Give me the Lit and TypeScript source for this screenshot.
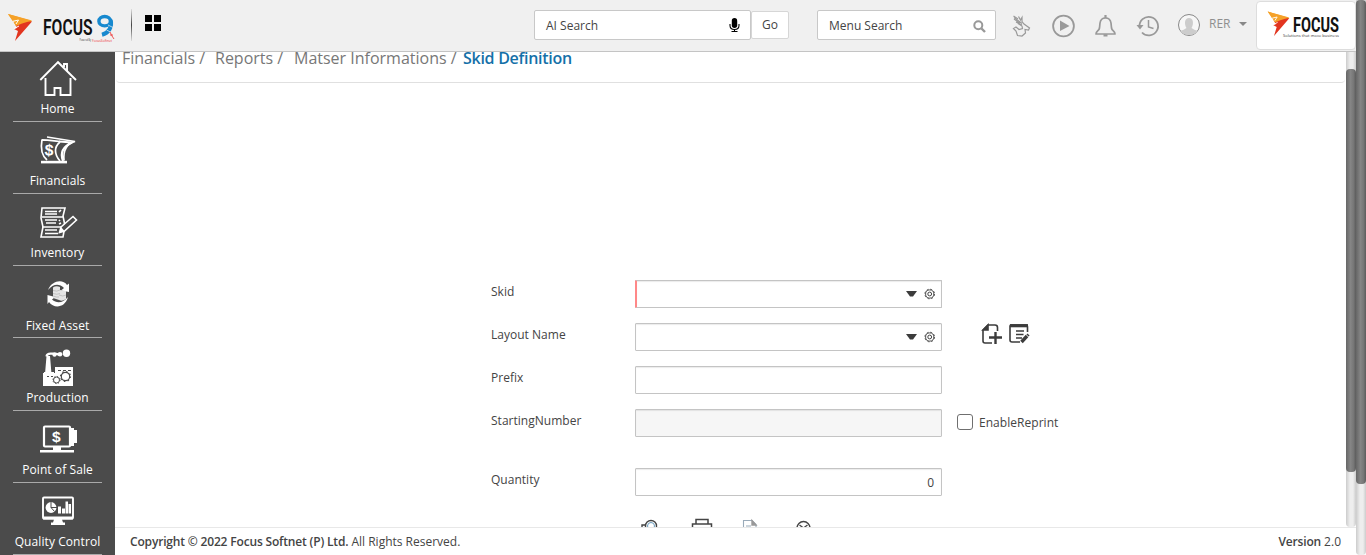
import { LitElement, html, css, svg } from "lit";
import { customElement, property } from "lit/decorators.js";

const flame = svg`
  <path d="M8 14 L32 21 L24 27 L15 24 Q11 19 8 14Z" fill="#f5a128"/>
  <path d="M32 21.5 L15 41 L18 31 L14 29 L17 28 L15 24 L19 22 L25 21 Z" fill="#e2351f"/>
  <path d="M8 14 L32 20.5 L22 23.5 L16 26 L14 23 L18 20.5 L13 21Z" fill="#f5a128"/>
  <path d="M13 21.3 L18.5 20 L16 24 M14 28.6 L19 26" stroke="#fff" stroke-width="1" fill="none"/>`;

const gear = svg`<circle cx="5.700" cy="6" r="4.800" fill="none" stroke="#444" stroke-width=".9" stroke-dasharray="2 1.77"/>
  <circle cx="5.700" cy="6" r="4.100" fill="none" stroke="#444" stroke-width=".9"/>
  <circle cx="5.700" cy="6" r="1.900" fill="none" stroke="#444" stroke-width="1"/>`;

const menuIcons: Record<string, unknown> = {
  home: svg`<g fill="none" stroke="#fff" stroke-width="1.9"><path d="M1.3 20 L19 2.2 L37 20"/><path d="M6.5 18V35H15.5V28H21.5V35H31.5V18"/><path d="M25 7V4H28V11"/></g>`,
  financials: svg`<g fill="none" stroke="#fff" stroke-width="1.7"><path d="M3 5.8 Q14 6.5 21 7.5 M3 5.5 C1.5 14 2 21 8 26 M21 8 C15 13 15 20 21 27"/><path d="M8 3 L36 7.5 C27 10 24 16 25 26.5"/><path d="M20 7.500 L33 8.500 C23 13 21 19 24 27" stroke-width="2.200"/></g>
    <rect x="2" y="26.8" width="26" height="2.6" fill="#fff"/><text x="5.5" y="21.500" font-size="16" font-weight="700" fill="#fff" transform="rotate(4 10 16)">$</text>`,
  inventory: svg`<g fill="none" stroke="#fff" stroke-width="1.6"><path d="M3 2H26L24 10L26 20L24 31H2L4 21L2 12Z M3 11H25 M3 21H24"/><path d="M6 5.5H18 M6 8H18 M6 14H18 M7 17H17 M6 24H18 M6 27.5H19 M20 6L22 4 M20 15L21 14 M20 18L22 17" stroke-width="1.7"/></g>
    <path d="M22 21 L34 10.5 L37.5 14 L25.5 25 L20.5 26.5Z" fill="#4b4b4b" stroke="#fff" stroke-width="1.6"/><path d="M22 21L25.5 25L20.5 26.5Z" fill="#fff"/>`,
  asset: svg`<path d="M9 11 C13 1 24 0 28 6 L30 4.5V13L22 11.5L25 9 C20 4 14 5 9 11Z M29 18 C26 29 15 30 10 23L8.5 25V16L16 18L13 20.5C18 25 24 24 29 18Z" fill="#fff"/>
    <path d="M14 8.5Q17 6.5 21 8V11L27 12V20Q23 23 20 21L14 19Z" fill="#e4e4e4"/><path d="M14 11.5Q18 13 21 11M14 14.5Q18 16 21 14.5M20 16Q24 18 27 16M14 17Q18 18.5 20 18" stroke="#aaa" stroke-width=".6" fill="none"/>`,
  production: svg`<path d="M7.500 7H11L12.500 25H6Z M5 23H15V37H5Z M4 24H16V18H34V37H4Z" fill="#fff"/><path d="M7.500 7.500Q8 4.500 12 4.700H16L20 5.500" stroke="#fff" stroke-width="2.3" fill="none"/><circle cx="15.500" cy="5.700" r="2.1" fill="#fff"/><circle cx="21" cy="5.3" r="2.300" fill="#fff"/><circle cx="27.500" cy="4.200" r="3.700" fill="#fff"/>
    <g fill="none" stroke="#4b4b4b"><circle cx="26.5" cy="27.5" r="4.2" stroke-width="1.2"/><circle cx="26.5" cy="27.5" r="5" stroke-width="1.2" stroke-dasharray="1.5 2.43"/><circle cx="17.5" cy="31" r="3" stroke-width="1"/><circle cx="17.5" cy="31" r="3.6" stroke-width="1" stroke-dasharray="1.2 1.63"/><path d="M19 21.5H22M24 21.5H27M29 21.5H32M8 27.5H10M12 27.5H14" stroke-width="1"/></g>`,
  sale: svg`<rect x="5" y="2.5" width="26" height="20" rx="1" fill="none" stroke="#fff" stroke-width="2.2"/><path d="M31 4H35V6H38V19H35V22H31Z M14 23H22V26H35V28.6H1V26H14Z" fill="#fff"/><text x="13" y="18" font-size="15.500" font-weight="700" fill="#fff">$</text>`,
  quality: svg`<rect x="4" y="2" width="30" height="21" rx="1" fill="none" stroke="#fff" stroke-width="1.900"/><path d="M4 21H34V24H4Z M15 24H23L24 27H26V29.5H12V27H14Z M19 11H22V18H19Z M23 13H26V18H23Z M26.500 6H29V18H26.500Z M29.500 8.500H32V18H29.500Z" fill="#fff"/><circle cx="12" cy="12" r="5.400" fill="#fff"/><path d="M12 6V12H18M12 12L15.500 16" stroke="#4b4b4b" stroke-width="1" fill="none"/>`,
};

/* key, label, vertical origin of the glyph's view box */
const menu: [string, string, number][] = [
  ["home", "Home", 2],
  ["financials", "Financials", 0],
  ["inventory", "Inventory", 0],
  ["asset", "Fixed Asset", -1],
  ["production", "Production", 1],
  ["sale", "Point of Sale", -1],
  ["quality", "Quality Control", -0.5],
];

@customElement("side-menu")
class SideMenu extends LitElement {
  static styles = css`
    :host { display: block; width: 115px; background: #4b4b4b; overflow: hidden; flex: none; }
    .list { display: flex; flex-direction: column; margin-top: -2.3px; }
    .item { height: 72.2px; flex: none; box-sizing: border-box; margin: 0 13px; border-bottom: 1px solid #a9a9a9; display: flex; flex-direction: column; align-items: center; color: #fff; font: 12px/18px "Open Sans", sans-serif; letter-spacing: .08px; }
    .item svg { width: 38px; height: 38px; flex: none; margin: 12px 0 .4px; overflow: visible; }
    .label { white-space: nowrap; }
  `;
  render() {
    return html`<nav class="list">${menu.map(([icon, label, top]) => html`
      <div class="item"><svg viewBox="0 ${top} 38 38" font-family="Liberation Sans">${menuIcons[icon]}</svg><span class="label">${label}</span></div>`)}</nav>`;
  }
}

@customElement("top-bar")
class TopBar extends LitElement {
  static styles = css`
    :host { display: flex; height: 52px; box-sizing: border-box; border-bottom: 1px solid #c4c4c4; background: #f0f0f0; font: 12px "Open Sans", sans-serif; color: #444; }
    svg { display: block; flex: none; }
    .divider { width: 1px; height: 32px; margin: 9px 13px 0 6px; background: linear-gradient(#ddd, #444 50%, #ddd); }
    .grid { margin-top: 15px; }
    .box { box-sizing: border-box; height: 30px; margin-top: 10px; background: #fff; border: 1px solid #c8c8c8; border-radius: 2px; display: flex; align-items: center; justify-content: space-between; padding-left: 11px; }
    .ai { width: 217px; margin-left: 373px; padding-right: 10px; }
    .go { box-sizing: border-box; width: 38px; height: 28px; margin-top: 11px; background: #fff; border: 1px solid #d6d6d6; border-radius: 2px; text-align: center; line-height: 26px; font-size: 12px; }
    .menu { width: 179px; margin-left: 28px; padding-right: 9px; }
    .menu svg { margin-top: 3px; }
    .tools { margin-left: 9px; }
    .user { color: #8f8f8f; margin: 15px 7px 0 9px; width: 23px; line-height: 17px; white-space: nowrap; }
    .caret { margin-top: 22px; }
    .brand { box-sizing: border-box; width: 100px; height: 49px; margin: 1px 0 0 9px; background: #fff; border: 1px solid #ddd; border-radius: 4px; }
  `;
  render() {
    return html`
      <svg width="125" height="51" viewBox="0 0 125 51">${flame}
        <text x="43" y="35" font-family="Roboto" font-weight="600" font-size="22.500" textLength="49.500" lengthAdjust="spacingAndGlyphs" fill="#111">FOCUS</text>
        <ellipse cx="104.700" cy="21.200" rx="5.800" ry="4.700" fill="none" stroke="#1789cf" stroke-width="3.400"/>
        <path d="M110.700 20C112.500 27 108.500 33 102 34.800" fill="none" stroke="#1789cf" stroke-width="4"/>
        <path d="M108 25L113 27.500M106.500 30L110.500 32" stroke="#f0f0f0" stroke-width=".7"/>
        <path d="M110 32L112 36L114 39M110 35H113" stroke="#e44" stroke-width=".9" fill="none"/>
        <text x="79.500" y="41" font-family="Open Sans" font-size="3" fill="#333" textLength="11.500" lengthAdjust="spacingAndGlyphs">Powered By</text>
        <text x="92" y="41.500" font-family="Open Sans" font-size="4" fill="#e33" textLength="20" lengthAdjust="spacingAndGlyphs">FocusSoftnet</text>
      </svg>
      <div class="divider"></div>
      <svg class="grid" width="16" height="16"><path d="M0 0H7V7H0ZM9 0H16V7H9ZM0 9H7V16H0ZM9 9H16V16H9Z" fill="#000"/></svg>
      <div class="box ai"><span>AI Search</span>
        <svg width="11" height="15" viewBox="0.500 0 11 15"><rect x="3.300" y="0" width="5.400" height="10" rx="2.700"/><path d="M1.500 6V7.500Q1.500 11.500 6 11.500Q10.500 11.500 10.500 7.500V6M6 11.500V13.500M3 13.500H9" fill="none" stroke="#000" stroke-width="1.100"/></svg>
      </div>
      <div class="go">Go</div>
      <div class="box menu"><span>Menu Search</span>
        <svg width="13" height="13"><circle cx="5.300" cy="5.300" r="4" fill="none" stroke="#999" stroke-width="2"/><path d="M8.500 8.500L12 12" stroke="#999" stroke-width="2.400"/></svg>
      </div>
      <svg class="tools" width="195" height="51" viewBox="1005 0 195 51" fill="none" stroke="#999" stroke-width="1.800">
        <path d="M1013.500 16L1018 19M1014 19L1020 23M1016 22L1022 25M1018.500 16.500L1020.500 20L1022 17.500V21.500L1024 24L1029.500 28L1028.500 30L1025 29.500L1025.500 33L1022 36L1017.500 35.500L1016 31L1013.500 28.500L1016 27L1019 29.500L1022.500 28.500L1022 26L1018 23.500" stroke-width="1.200"/>
        <path d="M1014 17.500L1022 23.500" stroke-width="1.300"/>
        <circle cx="1063.500" cy="26" r="10.400"/><path d="M1060 20.500L1069.500 26L1060 31Z" fill="#999" stroke="none"/>
        <path d="M1096 34H1115C1115 31 1112 31 1111.500 28L1111 23C1110.500 19.500 1108.500 18 1105.500 18C1102.500 18 1100.500 19.500 1100 23L1099.500 28C1099 31 1096 31 1096 34Z" stroke-width="1.700" stroke-linejoin="round"/><path d="M1105.500 15V18M1103.500 35.300H1107.500" stroke-width="2.200"/>
        <path d="M1139.500 27A9.300 9.300 0 1 1 1142 32.500"/><path d="M1136.500 25H1143.500L1140 29.500Z" fill="#999" stroke="none"/><path d="M1148.500 20V27L1153.500 28.500" stroke-width="1.500"/>
        <circle cx="1189" cy="25" r="10.500" fill="#f7f7f7" stroke="#888" stroke-width="1"/><path d="M1180 31Q1184 30 1186.500 28C1184 24 1184.500 18 1189 18S1194 24 1191.500 28Q1194 30 1198 31Q1195 35 1189 35T1180 31Z" fill="#ccc" stroke="none"/>
      </svg>
      <span class="user">RER</span>
      <svg class="caret" width="8" height="4"><path d="M0 0H8L4 4Z" fill="#888"/></svg>
      <div class="brand"><svg width="98" height="47" viewBox="1257 2 98 47">
        <g transform="translate(1260.500 -1) scale(.9)">${flame}</g>
        <text x="1293" y="31.500" font-family="Roboto" font-weight="700" font-size="21" textLength="46" lengthAdjust="spacingAndGlyphs" fill="#111">FOCUS</text>
        <text x="1283" y="37" font-family="Open Sans" font-size="4" textLength="56" fill="#333">Solutions that move business</text></svg></div>`;
  }
}

@customElement("form-field")
class FormField extends LitElement {
  @property() label = "";
  @property() value = "";
  @property({ type: Boolean }) picker = false;
  @property({ type: Boolean }) required = false;
  @property({ type: Boolean }) disabled = false;
  static styles = css`
    :host { display: flex; height: 28px; font: 12px/17px "Open Sans", sans-serif; color: #444; }
    .label { width: 144px; margin-top: 3px; letter-spacing: .02px; }
    .input { width: 307px; box-sizing: border-box; border: 1px solid #c4c4c4; border-radius: 1px; box-shadow: inset 0 1px 1px rgba(0,0,0,.08); background: #fff; display: flex; align-items: center; justify-content: flex-end; padding-right: 7px; }
    .required { border-left: 2px solid #f88; }
    .disabled { background: #f6f6f6; }
    .picker { padding-right: 5px; gap: 7px; }
  `;
  render() {
    const cls = `input${this.required ? " required" : ""}${this.disabled ? " disabled" : ""}${this.picker ? " picker" : ""}`;
    return html`<span class="label">${this.label}</span><div class=${cls}>${this.picker
      ? html`<svg width="11" height="6"><path d="M0 0H11L7 5.500H4Z" fill="#3c3c3c"/></svg><svg width="12" height="12">${gear}</svg>`
      : this.value}</div>`;
  }
}

@customElement("app-root")
class AppRoot extends LitElement {
  static styles = css`
    :host { display: grid; grid-template-columns: 1fr 10px; height: 555px; overflow: hidden; background: #fff; font: 12px/17px "Open Sans", sans-serif; color: #444; }
    .page { display: grid; grid-template-rows: 52px 503px; min-width: 0; }
    .body { display: flex; min-height: 0; }
    .right { flex: 1; display: grid; grid-template-rows: 475px 28px; min-width: 0; }
    .view { display: grid; grid-template-columns: 1fr 10px; overflow: hidden; }
    .content { overflow: hidden; min-width: 0; }
    .crumbs { height: 31px; box-sizing: border-box; margin: 0 1px; padding: 0 6px; border-bottom: 1px solid #e0e0e0; border-radius: 0 0 4px 4px; display: flex; font-size: 16px; line-height: 22px; color: #777; white-space: pre; }
    .crumbs span { margin-top: -5px; }
    .c1 { width: 93px; } .c2 { width: 79px; } .c3 { width: 169px; }
    .here { color: #1470a8; font-weight: 600; letter-spacing: -.28px; }
    .form { display: flex; flex-direction: column; gap: 15px; padding: 197px 0 0 376px; }
    .row { display: flex; height: 28px; }
    .last { margin-top: 16px; }
    .docs { margin: 0 0 0 39px; }
    .check { box-sizing: border-box; width: 16px; height: 16px; border: 1px solid #6f6f6f; border-radius: 3px; margin: 5px 6px 0 15px; }
    .checklabel { margin-top: 5px; letter-spacing: .04px; }
    .actions { margin: 5px 0 0 144px; display: block; flex: none; }
    .footer { box-sizing: border-box; border-top: 1px solid #e8e8e8; display: flex; justify-content: space-between; padding: 5px 15px 0; white-space: pre; }
    .footer b { font-weight: 600; letter-spacing: -.17px; }
    .track { background: linear-gradient(90deg, #ccc, #eee 40%, #eee 70%, #ccc); border-radius: 0 0 4px 4px; box-sizing: border-box; }
    .thumb { background: linear-gradient(90deg, #666, #858585 45%, #777 75%, #5c5c5c); border-radius: 4px; }
    .inner { padding-top: 17px; }
    .inner .thumb { height: 403px; }
    .outer .thumb { height: 484px; }
  `;
  render() {
    return html`
      <div class="page">
        <top-bar></top-bar>
        <div class="body">
          <side-menu></side-menu>
          <div class="right">
            <div class="view">
              <div class="content">
                <div class="crumbs"><span class="c1">Financials /</span><span class="c2">Reports /</span><span class="c3">Matser Informations /</span><span class="here">Skid Definition</span></div>
                <div class="form">
                  <div class="row"><form-field label="Skid" picker required></form-field></div>
                  <div class="row"><form-field label="Layout Name" picker></form-field>
                    <svg class="docs" width="50" height="24" viewBox="981 323 50 24" fill="none" stroke="#3c3c3c" stroke-width="1.600">
                      <path d="M992 343H985Q983 343 983 341V330L988 325H995Q997.500 325 997.500 327.500V331"/><path d="M983 330L988 325V330Z" fill="#3c3c3c"/><path d="M995.500 332V344M989 337.500H1002" stroke-width="2.400"/>
                      <path d="M1020 342H1012Q1010 342 1010 340V326Q1010 325 1011 325H1026Q1027.500 325 1027.500 327V332"/><path d="M1010 325.700H1028" stroke-width="3.200"/><path d="M1016 331H1024M1016 334.500H1023.500M1016 338H1022" stroke-width="1.500"/><path d="M1021.500 342L1027 336" stroke-width="3.400"/><path d="M1027.500 335.500L1028.500 334.500" stroke-width="3"/>
                    </svg></div>
                  <div class="row"><form-field label="Prefix"></form-field></div>
                  <div class="row"><form-field label="StartingNumber" disabled></form-field><span class="check"></span><span class="checklabel">EnableReprint</span></div>
                  <div class="row last"><form-field label="Quantity" value="0"></form-field></div>
                  <svg class="actions" width="190" height="20" viewBox="635 516 190 20" fill="none" stroke="#444" stroke-width="1.400">
                    <circle cx="651" cy="526" r="5.500"/><circle cx="651" cy="526" r="3.500" stroke="#69b" stroke-width="1"/><path d="M646 525H642V532"/>
                    <path d="M696 524V519.500H708V524M692.500 530V524H711.500V530" stroke-width="1.500"/>
                    <path d="M743.500 532V520.500H752L756 524.500V532M746 526H751" stroke="#9aabba" stroke-width="1.100"/><path d="M752 520.500V525H756Z" fill="#999" stroke="#999"/>
                    <circle cx="803.500" cy="528" r="6.500"/><path d="M799.500 525L803.500 528L807.500 525" stroke-width="1.300"/>
                  </svg>
                </div>
              </div>
              <div class="track inner"><div class="thumb"></div></div>
            </div>
            <div class="footer"><span><b>Copyright © 2022 Focus Softnet (P) Ltd.</b> All Rights Reserved.</span><span><b>Version</b> 2.0</span></div>
          </div>
        </div>
      </div>
      <div class="track outer"><div class="thumb"></div></div>`;
  }
}
